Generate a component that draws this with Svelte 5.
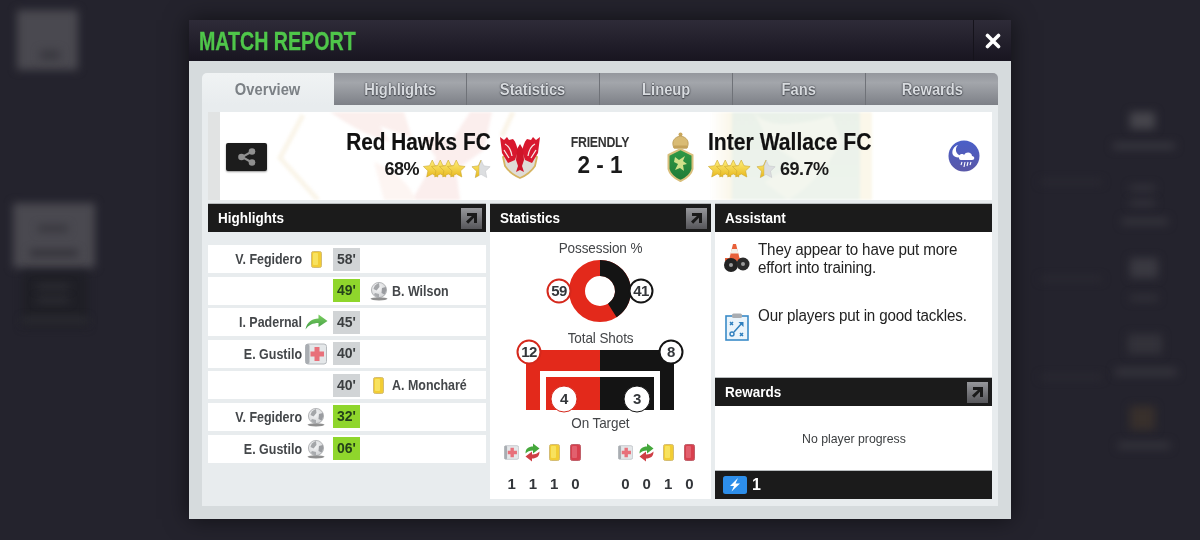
<script>
  const blurs = [
    { x: 17, y: 10, w: 61, h: 60, c: '#4a4950' },
    { x: 13, y: 203, w: 82, h: 65, c: '#4a4950' },
    { x: 22, y: 272, w: 66, h: 55, c: '#1f1f26' },
    { x: 40, y: 50, w: 20, h: 10, c: '#3a3940' },
    { x: 38, y: 225, w: 30, h: 7, c: '#38373e' },
    { x: 30, y: 250, w: 48, h: 6, c: '#302f36' },
    { x: 37, y: 285, w: 32, h: 4, c: '#34343a' },
    { x: 37, y: 298, w: 32, h: 4, c: '#34343a' },
    { x: 22, y: 318, w: 66, h: 4, c: '#34343a' },
    { x: 1130, y: 112, w: 25, h: 17, c: '#46454c' },
    { x: 1113, y: 143, w: 62, h: 6, c: '#3a3941' },
    { x: 1130, y: 185, w: 25, h: 6, c: '#35343c' },
    { x: 1130, y: 200, w: 25, h: 6, c: '#35343c' },
    { x: 1122, y: 218, w: 46, h: 7, c: '#35343c' },
    { x: 1130, y: 258, w: 28, h: 20, c: '#3a3941' },
    { x: 1130, y: 295, w: 28, h: 6, c: '#33323a' },
    { x: 1128, y: 334, w: 34, h: 20, c: '#33323a' },
    { x: 1115, y: 368, w: 62, h: 8, c: '#35343c' },
    { x: 1130, y: 406, w: 25, h: 24, c: '#38302c' },
    { x: 1118, y: 442, w: 52, h: 7, c: '#35343c' },
    { x: 1040, y: 180, w: 62, h: 4, c: '#2d2c34' },
    { x: 1040, y: 277, w: 62, h: 4, c: '#2d2c34' },
    { x: 1040, y: 375, w: 62, h: 4, c: '#2d2c34' }
  ];

  const tabs = ['Overview', 'Highlights', 'Statistics', 'Lineup', 'Fans', 'Rewards'];

  const events = [
    { name: 'V. Fegidero', icon: 'yellow', time: "58'" },
    { name: 'B. Wilson', icon: 'ball', time: "49'", away: true, goal: true },
    { name: 'I. Padernal', icon: 'sub', time: "45'" },
    { name: 'E. Gustilo', icon: 'injury', time: "40'" },
    { name: 'A. Moncharé', icon: 'yellow', time: "40'", away: true },
    { name: 'V. Fegidero', icon: 'ball', time: "32'", goal: true },
    { name: 'E. Gustilo', icon: 'ball', time: "06'", goal: true }
  ];

  const tally = [
    { icon: 'injury', home: 1, away: 0 },
    { icon: 'swap', home: 1, away: 0 },
    { icon: 'yellow', home: 1, away: 1 },
    { icon: 'red', home: 0, away: 0 }
  ];

  const starPath = 'M9 0.5 L11.6 6 L17.6 6.8 L13.2 11 L14.4 17 L9 14 L3.6 17 L4.8 11 L0.4 6.8 L6.4 6 Z';
</script>

{#snippet card(kind)}
  <svg class="ic-card" width="11" height="17" viewBox="0 0 11 17">
    <rect x="0.5" y="0.5" width="10" height="16" rx="1.8" fill={kind === 'red' ? '#d8404e' : '#f2cd34'} stroke={kind === 'red' ? '#c0606a' : '#d4bc74'} />
    <rect x="2" y="2" width="5" height="12" rx="1" fill={kind === 'red' ? '#e2606e' : '#f8e25e'} />
  </svg>
{/snippet}

{#snippet ball()}
  <svg width="18" height="20" viewBox="0 0 18 20">
    <ellipse cx="9" cy="17.8" rx="8.5" ry="1.6" fill="#444" opacity="0.6" />
    <circle cx="9" cy="9" r="7.6" fill="url(#ballGrad)" stroke="#8e9094" stroke-width="0.6" />
    <path d="M9 2 C6 3 4 5 3.5 8 L6.5 9.5 L9.5 6 Z" fill="#a4a6a9" />
    <path d="M12 7 L15.8 6 C16.6 8.5 16 11.5 14.5 13.5 L11.5 12 Z" fill="#9a9ca0" />
    <path d="M5 12 L9 13 L9 16.4 C7 16.4 5 15 4 13.5 Z" fill="#a9abae" />
  </svg>
{/snippet}

{#snippet subArrow()}
  <svg width="23" height="16" viewBox="0 0 23 16">
    <path d="M0.5 15.5 C2 8 7 4.5 13.5 4.5 V0.5 L22.5 7 L13.5 13 V9 C8 9 3.5 11 0.5 15.5 Z" fill="url(#greenGrad)" />
  </svg>
{/snippet}

{#snippet injury(size)}
  <svg width={size} height={size} viewBox="0 0 22 22">
    <rect x="0.5" y="1" width="21" height="20" rx="2.5" fill="#e4e7e9" stroke="#b4b8bc" />
    <rect x="0.5" y="1" width="4" height="20" rx="2" fill="#a9adb2" />
    <path d="M9.5 4 H14.5 V8.5 H19 V13.5 H14.5 V18 H9.5 V13.5 H5.5 V8.5 H9.5 Z" fill="#e8707a" />
  </svg>
{/snippet}

{#snippet swap()}
  <svg width="15" height="19" viewBox="0 0 15 19">
    <path d="M0.5 10.5 C0.5 5.5 3.5 3.5 8 3.5 V0.5 L14.5 5.5 L8 10.5 V7.5 C4.5 7.5 2.5 8.5 0.5 10.5 Z" fill="#45a83c" />
    <path d="M14.5 8.5 C14.5 13.5 11.5 15.5 7 15.5 V18.5 L0.5 13.5 L7 8.5 V11.5 C10.5 11.5 12.5 10.5 14.5 8.5 Z" fill="#cf3f45" />
  </svg>
{/snippet}

{#snippet expand()}
  <span class="expand">
    <svg width="13" height="13" viewBox="0 0 13 13">
      <path d="M2 1 H12 V11 H9 V5.8 L3.2 11.8 L1 9.6 L6.9 4 H2 Z" fill="#1a1a1a" />
    </svg>
  </span>
{/snippet}

{#snippet stars()}
  <svg class="stars" width="68" height="20" viewBox="0 0 68 20">
    {#each [0, 8, 16, 24] as x}
      <path d={starPath} transform="translate({x} 0.5) scale(1.03)" fill="url(#goldGrad)" stroke="#cda92f" stroke-width="0.6" />
    {/each}
    <g transform="translate(48.5 0.5) scale(1.06)">
      <path d={starPath} fill="#dcdee0" stroke="#c9cbce" stroke-width="0.6" />
      <path d="M9 0.5 L6.4 6 L0.4 6.8 L4.8 11 L3.6 17 L7 15.1 L7 6 Z" fill="url(#goldGrad)" stroke="#cda92f" stroke-width="0.4" />
    </g>
  </svg>
{/snippet}

<svg class="defs" width="0" height="0" aria-hidden="true">
  <defs>
    <linearGradient id="goldGrad" x1="0" y1="0" x2="0" y2="1">
      <stop offset="0" stop-color="#fff07a" />
      <stop offset="1" stop-color="#e8b81e" />
    </linearGradient>
    <linearGradient id="greenGrad" x1="0" y1="0" x2="0" y2="1">
      <stop offset="0" stop-color="#7cd060" />
      <stop offset="1" stop-color="#3f9a45" />
    </linearGradient>
    <radialGradient id="ballGrad" cx="0.4" cy="0.35" r="0.7">
      <stop offset="0" stop-color="#f8f8f9" />
      <stop offset="1" stop-color="#cfd1d3" />
    </radialGradient>
    <linearGradient id="wxGrad" x1="0" y1="0" x2="0" y2="1">
      <stop offset="0" stop-color="#4a5fc8" />
      <stop offset="1" stop-color="#5a58a8" />
    </linearGradient>
    <linearGradient id="shieldGreen" x1="0" y1="0" x2="0" y2="1">
      <stop offset="0" stop-color="#2f9a45" />
      <stop offset="1" stop-color="#1f7a38" />
    </linearGradient>
    <linearGradient id="creamFade" x1="0" y1="0" x2="1" y2="0">
      <stop offset="0" stop-color="#fff" />
      <stop offset="1" stop-color="#faf6e8" />
    </linearGradient>
    <linearGradient id="paleGreen" x1="0" y1="0" x2="0" y2="1">
      <stop offset="0" stop-color="#eaf1e9" />
      <stop offset="1" stop-color="#edf3ec" />
    </linearGradient>
  </defs>
</svg>

<div class="screen">
  <div class="backdrop" aria-hidden="true">
    {#each blurs as b}
      <i style="left:{b.x}px;top:{b.y}px;width:{b.w}px;height:{b.h}px;background:{b.c}"></i>
    {/each}
  </div>

  <section class="modal">
    <header class="modal-head">
      <h1>MATCH REPORT</h1>
      <button class="close" aria-label="Close">
        <svg width="16" height="16" viewBox="0 0 16 16">
          <path d="M2.5 2.5 L13.5 13.5 M13.5 2.5 L2.5 13.5" stroke="#fff" stroke-width="3.6" stroke-linecap="round" />
        </svg>
      </button>
    </header>

    <div class="modal-body">
      <nav class="tabs">
        {#each tabs as tab, i}
          <div class="tab" class:active={i === 0}><span>{tab}</span></div>
        {/each}
      </nav>

      <div class="panel">
        <div class="banner">
          <svg class="watermark" width="772" height="88" viewBox="12 0 772 88" aria-hidden="true">
            <path d="M95 3 L72 46 L110 88" fill="none" stroke="#faf5ea" stroke-width="5" />
            <path d="M305 0 L294 24" stroke="#faf4e8" stroke-width="5" />
            <path d="M122 0 C142 14 160 24 182 30 L172 14 L204 26 L196 0 Z" fill="#fbefed" />
            <path d="M262 0 L244 28 L214 24 L228 46 L204 88 H252 L248 58 L276 38 L284 0 Z" fill="#fbeeed" />
            <path d="M166 50 C186 58 200 70 208 88 H176 Z" fill="#fdf5f2" />
            <rect x="502" y="0" width="22" height="88" fill="url(#creamFade)" />
            <rect x="524" y="0" width="128" height="88" fill="url(#paleGreen)" />
            <rect x="652" y="0" width="12" height="88" fill="#fbf7ea" />
            <path d="M546 0 C560 20 600 10 624 4 L634 30 C620 50 610 70 580 88 L556 70 L590 50 L560 30 Z" fill="#f3f6ee" />
          </svg>

          <button class="share" aria-label="Share">
            <svg width="20" height="20" viewBox="0 0 20 20">
              <path d="M15 4.5 L5 10 L15 15.5" stroke="#8f8f8f" stroke-width="2" fill="none" />
              <circle cx="15" cy="4.5" r="3.3" fill="#8f8f8f" />
              <circle cx="4.5" cy="10" r="3.3" fill="#8f8f8f" />
              <circle cx="15" cy="15.5" r="3.3" fill="#8f8f8f" />
            </svg>
          </button>

          <div class="team home">
            <div class="team-text">
              <div class="team-name">Red Hawks FC</div>
              <div class="team-sub"><span>68%</span>{@render stars()}</div>
            </div>
            <svg class="crest" width="42" height="44" viewBox="0 0 42 44">
              <path d="M4 22 L21 14 L38 22 L36 31 C32 37 26 41 21 43 C16 41 10 37 6 31 Z" fill="#dfdcd6" stroke="#d6b460" stroke-width="1.8" />
              <path d="M1 2 L5 5 L8 2 L10 5 L14 4 C17 7 18 12 19 16 L16 25 L9 28 L3 18 Z" fill="#d8182e" />
              <path d="M41 2 L37 5 L34 2 L32 5 L28 4 C25 7 24 12 23 16 L26 25 L33 28 L39 18 Z" fill="#d8182e" />
              <path d="M21 9 L24 14 L25 25 L23 31 L25 37 L21 35 L17 37 L19 31 L17 25 L18 14 Z" fill="#cf1428" />
              <path d="M6 9 C10 11 12 15 13 21 M36 9 C32 11 30 15 29 21 M5 15 L10 23 M37 15 L32 23" stroke="#f7e6e6" stroke-width="1.3" fill="none" />
            </svg>
          </div>

          <div class="match">
            <div class="match-type">FRIENDLY</div>
            <div class="match-score">2 - 1</div>
          </div>

          <div class="team away">
            <svg class="crest" width="27" height="50" viewBox="0 0 27 50">
              <circle cx="13.5" cy="2.5" r="2" fill="#c9a85e" />
              <path d="M7 16 C4 10 7 5 13.5 4 C20 5 23 10 20 16 Z" fill="#d9bb74" stroke="#b8964e" stroke-width="0.8" />
              <rect x="6.5" y="13.5" width="14" height="3" rx="1" fill="#c4a25a" />
              <path d="M1.5 23 L13.5 17 L25.5 23 V37 C24 43 18 47 13.5 49 C9 47 3 43 1.5 37 Z" fill="url(#shieldGreen)" stroke="#d9bf7c" stroke-width="2" />
              <path d="M8 25 L12 28 L18 24 L16 29 L20 32 L16 33 L17 39 L13 36 L8 38 L11 32 L7 30 Z" fill="#cfe08a" />
            </svg>
            <div class="team-text">
              <div class="team-name">Inter Wallace FC</div>
              <div class="team-sub">{@render stars()}<span>69.7%</span></div>
            </div>
          </div>

          <div class="weather">
            <svg width="32" height="32" viewBox="0 0 32 32">
              <circle cx="16" cy="16" r="15.5" fill="url(#wxGrad)" />
              <path d="M10 5 C6 9 8 15 14 16 C12 18 7 18 5 15 C3 11 6 6 10 5 Z" fill="#fff" />
              <path d="M11 18 C10 14 15 13 16 15 C18 11 24 12 24 16 C27 16 27 20 24 20 H13 C11 20 11 18 11 18 Z" fill="#fff" />
              <path d="M14 22 L13 25 M17 22 L16 27 M20 22 L19 26 M23 22 L22 25" stroke="#fff" stroke-width="1.1" />
            </svg>
          </div>
        </div>

        <div class="columns">
          <div class="col">
            <div class="col-head"><span>Highlights</span>{@render expand()}</div>
            <ul class="events">
              {#each events as e}
                <li class="event">
                  <span class="e-name">{e.away ? '' : e.name}</span>
                  <span class="e-icon left">
                    {#if !e.away}
                      {#if e.icon === 'yellow'}{@render card('yellow')}{/if}
                      {#if e.icon === 'ball'}{@render ball()}{/if}
                      {#if e.icon === 'sub'}{@render subArrow()}{/if}
                      {#if e.icon === 'injury'}{@render injury(22)}{/if}
                    {/if}
                  </span>
                  <span class="e-time" class:goal={e.goal}>{e.time}</span>
                  <span class="e-icon right">
                    {#if e.away}
                      {#if e.icon === 'yellow'}{@render card('yellow')}{/if}
                      {#if e.icon === 'ball'}{@render ball()}{/if}
                    {/if}
                  </span>
                  <span class="e-name-right">{e.away ? e.name : ''}</span>
                </li>
              {/each}
            </ul>
          </div>

          <div class="col">
            <div class="col-head"><span>Statistics</span>{@render expand()}</div>
            <div class="stats">
              <div class="stat-label first">Possession %</div>
              <svg class="chart" width="221" height="74" viewBox="0 0 221 74">
                <circle cx="110" cy="35" r="23" fill="none" stroke="#e3291b" stroke-width="16" />
                <path d="M110 4 A31 31 0 0 1 126.6 61.2 L118 47.7 A15 15 0 0 0 110 20 Z" fill="#141414" />
                <g class="badge">
                  <circle cx="69" cy="35" r="11.5" fill="#fff" stroke="#d5281c" stroke-width="2" />
                  <text x="69" y="40">59</text>
                  <circle cx="151" cy="35" r="11.5" fill="#fff" stroke="#141414" stroke-width="2" />
                  <text x="151" y="40">41</text>
                </g>
              </svg>
              <div class="stat-label">Total Shots</div>
              <svg class="chart shots" width="221" height="72" viewBox="0 0 221 72">
                <path d="M36 2 H110 V23 H50 V62 H36 Z" fill="#e3291b" />
                <path d="M110 2 H184 V62 H170 V23 H110 Z" fill="#141414" />
                <path d="M56 29 H110 V62 H56 Z" fill="#e3291b" />
                <path d="M110 29 H164 V62 H110 Z" fill="#141414" />
                <g class="badge">
                  <circle cx="39" cy="4" r="11.5" fill="#fff" stroke="#d5281c" stroke-width="2" />
                  <text x="39" y="9">12</text>
                  <circle cx="181" cy="4" r="11.5" fill="#fff" stroke="#141414" stroke-width="2" />
                  <text x="181" y="9">8</text>
                  <circle cx="74" cy="51" r="13" fill="#fff" stroke="#d5281c" stroke-width="1" />
                  <text x="74" y="56">4</text>
                  <circle cx="147" cy="51" r="13" fill="#fff" stroke="#141414" stroke-width="1" />
                  <text x="147" y="56">3</text>
                </g>
              </svg>
              <div class="stat-label target">On Target</div>
              <div class="tally">
                {#each ['home', 'away'] as side}
                  <div class="tally-side">
                    {#each tally as t}
                      <span class="t-icon">
                        {#if t.icon === 'injury'}{@render injury(15)}{/if}
                        {#if t.icon === 'swap'}{@render swap()}{/if}
                        {#if t.icon === 'yellow' || t.icon === 'red'}{@render card(t.icon)}{/if}
                      </span>
                    {/each}
                    {#each tally as t}
                      <span class="t-num">{t[side]}</span>
                    {/each}
                  </div>
                {/each}
              </div>
            </div>
          </div>

          <div class="col">
            <div class="col-head"><span>Assistant</span></div>
            <div class="assistant">
              <div class="tip">
                <svg width="27" height="30" viewBox="0 0 27 30">
                  <path d="M10 1 H13 L16.5 15 H21 V18 H2 V15 H6.5 Z" fill="#e8603a" />
                  <path d="M8.6 6 H14.4 L15.4 10.5 H7.6 Z" fill="#f2efe8" />
                  <circle cx="8" cy="22" r="7" fill="#222" />
                  <circle cx="20" cy="21" r="6.5" fill="#2a2a2a" />
                  <circle cx="8" cy="22" r="2" fill="#9a9a9a" />
                  <circle cx="20" cy="21" r="2" fill="#9a9a9a" />
                </svg>
                <p>They appear to have put more effort into training.</p>
              </div>
              <div class="tip">
                <svg width="24" height="28" viewBox="0 0 24 28">
                  <rect x="1" y="3" width="22" height="24" fill="#eaf4fb" stroke="#3a8bc8" stroke-width="1.6" />
                  <rect x="7" y="0.5" width="10" height="4.5" rx="1.5" fill="#a9adb2" />
                  <path d="M5 9 L8 12 M8 9 L5 12 M15 20 L18 23 M18 20 L15 23 M9 19 L17 10" stroke="#2f7fbe" stroke-width="1.5" fill="none" />
                  <path d="M13.5 9 H18.5 V14 Z" fill="#2f7fbe" />
                  <circle cx="7" cy="21" r="2" fill="none" stroke="#2f7fbe" stroke-width="1.4" />
                </svg>
                <p>Our players put in good tackles.</p>
              </div>
            </div>
            <div class="col-head rewards-head"><span>Rewards</span>{@render expand()}</div>
            <div class="rewards"><span>No player progress</span></div>
            <div class="col-head energy">
              <svg width="24" height="18" viewBox="0 0 24 18">
                <rect width="24" height="18" rx="2.5" fill="#2d8eea" />
                <path d="M15 2 L7 10 H11 L8.5 15.5 L17 7.5 H12.5 Z" fill="#fff" />
              </svg>
              <b>1</b>
            </div>
          </div>
        </div>
      </div>
    </div>
  </section>
</div>

<style>
  :global(body) {
    margin: 0;
    background: #24232d;
  }

  .defs {
    position: absolute;
  }

  .screen {
    position: relative;
    width: 1200px;
    height: 540px;
    overflow: hidden;
    padding-top: 20px;
    box-sizing: border-box;
    font-family: "Liberation Sans", Arial, sans-serif;
    background: #24232d;
  }

  .backdrop i {
    position: absolute;
    filter: blur(4px);
  }

  .modal {
    position: relative;
    width: 822px;
    height: 499px;
    margin: 0 auto;
    box-shadow: 0 0 22px rgba(0, 0, 0, 0.55);
    display: flex;
    flex-direction: column;
    filter: blur(0.3px);
  }

  .modal-head {
    height: 41px;
    flex: none;
    display: flex;
    justify-content: space-between;
    background: linear-gradient(#2e2b38, #181520);
  }

  h1 {
    margin: 0;
    padding-left: 10px;
    font-size: 25px;
    line-height: 42px;
    font-weight: 700;
    color: #4fc64a;
    -webkit-text-stroke: 0.3px #4fc64a;
    transform: scaleX(0.785);
    transform-origin: 10px 50%;
    white-space: nowrap;
  }

  .close {
    width: 38px;
    padding: 0;
    border: none;
    border-left: 1px solid #15131b;
    background: transparent;
    display: flex;
    align-items: center;
    justify-content: center;
  }

  .modal-body {
    flex: 1;
    padding: 12px 13px 13px;
    background: #d6dbdd;
    display: flex;
    flex-direction: column;
  }

  .tabs {
    display: flex;
    height: 32px;
    flex: none;
  }

  .tab {
    flex: 1;
    text-align: center;
    line-height: 33px;
    font-size: 16px;
    font-weight: 700;
    color: #d8dbdf;
    text-shadow: 0 0 2px #44474d, 0 0 1px #44474d, 0 1px 1px #4b4e54;
    background: linear-gradient(#94979d, #a3a6ab 30%, #7d8087);
    border-left: 1px solid #6f7278;
    box-sizing: border-box;
  }

  .tab span {
    display: inline-block;
    transform: scaleX(0.92);
  }

  .tab:nth-child(2) {
    border-left: none;
  }

  .tab:last-child {
    border-top-right-radius: 5px;
  }

  .tab.active {
    color: #7b8085;
    text-shadow: none;
    background: linear-gradient(#f0f3f4, #e8ecee);
    border-left: none;
    border-top-left-radius: 5px;
  }

  .panel {
    flex: 1;
    padding: 7px 6px 6px;
    background: #e8ecee;
    display: flex;
    flex-direction: column;
  }

  .banner {
    position: relative;
    height: 88px;
    flex: none;
    box-sizing: border-box;
    border-left: 12px solid #e1e3e3;
    padding: 0 12px 0 6px;
    background: #fff;
    display: grid;
    grid-template-columns: 42px 273px 126px 1fr 32px;
    align-items: center;
    overflow: hidden;
  }

  .watermark {
    position: absolute;
    left: 0;
    top: 0;
    filter: blur(1.5px);
  }

  .share {
    position: relative;
    width: 41px;
    height: 28px;
    margin-top: 2px;
    padding: 0;
    border: none;
    border-radius: 2px;
    background: #1c1c1c;
    box-shadow: 0 1px 2px rgba(0, 0, 0, 0.4);
    display: flex;
    align-items: center;
    justify-content: center;
  }

  .team,
  .match,
  .weather {
    position: relative;
  }

  .team {
    display: flex;
    align-items: center;
  }

  .team.home {
    justify-content: flex-end;
    gap: 8px;
  }

  .team.away {
    gap: 14px;
  }

  .crest {
    flex: none;
    margin-top: 2px;
  }

  .team-text {
    display: flex;
    flex-direction: column;
    padding-bottom: 2px;
  }

  .home .team-text {
    align-items: flex-end;
  }

  .team-name {
    font-size: 24px;
    line-height: 28px;
    font-weight: 700;
    color: #111;
    -webkit-text-stroke: 0.2px #111;
    white-space: nowrap;
  }

  .home .team-name {
    transform: scaleX(0.867);
    transform-origin: right center;
  }

  .away .team-name {
    transform: scaleX(0.88);
    transform-origin: left center;
  }

  .team-sub {
    display: flex;
    align-items: center;
    gap: 4px;
    height: 26px;
    font-size: 18px;
    font-weight: 700;
    letter-spacing: -0.5px;
    color: #1a1a1a;
  }

  .match {
    text-align: center;
    color: #222;
    font-weight: 700;
    padding-right: 8px;
  }

  .match-type {
    font-size: 14px;
    line-height: 18px;
    letter-spacing: -0.3px;
    color: #333;
    transform: scaleX(0.88);
  }

  .match-score {
    font-size: 24px;
    line-height: 28px;
    color: #1a1a1a;
    transform: scaleX(0.94);
  }

  .weather {
    height: 32px;
  }

  .columns {
    margin-top: 4px;
    display: grid;
    grid-template-columns: 278px 221px 277px;
    gap: 4px;
  }

  .col {
    display: flex;
    flex-direction: column;
  }

  .col-head {
    position: relative;
    height: 28px;
    flex: none;
    box-sizing: border-box;
    padding-left: 10px;
    background: #1b1b1b;
    color: #fff;
    font-size: 15px;
    line-height: 28px;
    font-weight: 700;
    box-shadow: 0 -1px 0 #b8bcbe;
  }

  .col-head span:first-child {
    display: inline-block;
    transform: scaleX(0.9);
    transform-origin: left center;
  }

  .expand {
    position: absolute;
    right: 4px;
    top: 4px;
    width: 21px;
    height: 21px;
    background: linear-gradient(#96979b, #56565a);
    display: flex;
    align-items: center;
    justify-content: center;
  }

  .events {
    list-style: none;
    margin: 13px 0 0;
    padding: 0;
    display: flex;
    flex-direction: column;
    gap: 3.6px;
  }

  .event {
    height: 28px;
    background: #fff;
    display: grid;
    grid-template-columns: 94px 31px 27px 32px 1fr;
    align-items: center;
    font-size: 14px;
    font-weight: 700;
    color: #44474a;
  }

  .e-name {
    text-align: right;
    white-space: nowrap;
    transform: scaleX(0.89);
    transform-origin: right center;
  }

  .e-name-right {
    white-space: nowrap;
    transform: scaleX(0.89);
    transform-origin: left center;
  }

  .e-icon {
    display: flex;
    align-items: center;
    justify-content: center;
  }

  .e-icon.left {
    padding-right: 3px;
  }

  .e-icon.right {
    padding-left: 5px;
  }

  .e-time {
    height: 23px;
    line-height: 23px;
    text-align: center;
    background: #d1d4d6;
    color: #3b3e40;
  }

  .e-time.goal {
    background: #8fd62c;
    color: #24401a;
  }

  .stats {
    height: 267px;
    background: #fff;
    display: flex;
    flex-direction: column;
    align-items: center;
  }

  .stat-label {
    font-size: 15px;
    line-height: 16px;
    letter-spacing: -0.1px;
    color: #444649;
    transform: scaleX(0.9);
  }

  .stat-label.first {
    margin-top: 8px;
  }

  .stat-label.target {
    margin-top: -5px;
  }

  .chart {
    display: block;
    overflow: visible;
    flex: none;
  }

  .chart.shots {
    margin-top: 2px;
  }

  .badge text {
    font-size: 15px;
    font-weight: 700;
    letter-spacing: -0.5px;
    text-anchor: middle;
    fill: #33363a;
  }

  .tally {
    width: 100%;
    margin-top: 12px;
    box-sizing: border-box;
    padding: 0 11px;
    display: flex;
    justify-content: space-between;
  }

  .tally-side {
    display: grid;
    grid-template-columns: repeat(4, 21.3px);
    row-gap: 14px;
    justify-items: center;
    align-items: center;
  }

  .t-icon {
    display: flex;
    height: 18px;
    align-items: center;
  }

  .t-num {
    font-size: 15px;
    line-height: 18px;
    font-weight: 700;
    color: #33363a;
  }

  .assistant {
    height: 145px;
    box-sizing: border-box;
    padding: 9px 0 0 8px;
    background: #fff;
  }

  .tip {
    height: 66px;
    display: grid;
    grid-template-columns: 35px 1fr;
    align-items: start;
  }

  .tip svg {
    margin-top: 2px;
  }

  .tip:last-child svg {
    margin-top: 6px;
    margin-left: 2px;
  }

  .tip p {
    margin: 0;
    font-size: 16px;
    line-height: 18px;
    letter-spacing: -0.15px;
    color: #222;
    width: 226px;
    transform: scaleX(0.948);
    transform-origin: left center;
  }

  .rewards-head {
    margin-top: 1px;
  }

  .rewards {
    height: 64px;
    background: #fff;
    text-align: center;
    line-height: 65px;
    font-size: 13px;
    color: #3b3e40;
  }

  .rewards span {
    display: inline-block;
    transform: scaleX(0.945);
  }

  .energy {
    margin-top: 1px;
    padding-left: 8px;
    display: flex;
    align-items: center;
    gap: 5px;
    font-size: 16px;
  }
</style>
